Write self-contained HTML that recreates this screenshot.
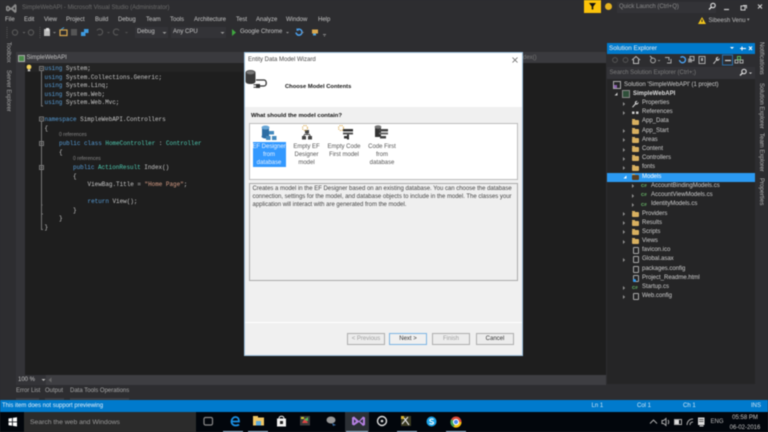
<!DOCTYPE html>
<html><head><meta charset="utf-8"><style>
html,body{margin:0;padding:0;width:768px;height:432px;overflow:hidden;background:#2d2d30}
#w{position:absolute;left:0;top:0;width:768px;height:432px;overflow:hidden;background:#2d2d30;filter:blur(.4px)}
body{font-family:"Liberation Sans",sans-serif;font-size:6px;color:#c8c8c8}
.a{position:absolute}
.t{position:absolute;white-space:nowrap;line-height:9px}
.c{position:absolute;white-space:nowrap;font-family:"Liberation Mono",monospace;font-size:5.95px;line-height:9px;color:#c8c8c8}
.k{color:#569cd6}.g{color:#4ec9b0}.s{color:#d69d85}
.r{position:absolute;font-size:5px;color:#888;white-space:nowrap;line-height:6px}
.v{position:absolute;writing-mode:vertical-rl;white-space:nowrap;font-size:6px;color:#b5b5b5;line-height:8px}
.tr{position:absolute;white-space:nowrap;font-size:6px;line-height:9px;color:#d0d0d0}
.f{position:absolute;width:7px;height:5px;background:#d8b060;border-radius:1px}
.f:before{content:"";position:absolute;left:0;top:-1px;width:3px;height:1px;background:#d8b060}
.ar{position:absolute;width:0;height:0;border-left:2.5px solid #999;border-top:2px solid transparent;border-bottom:2px solid transparent}
.b{position:absolute;height:12px;top:333px;width:38px;background:#ececec;border:1px solid #adadad;box-sizing:border-box;text-align:center;font-size:6px;line-height:10.5px;color:#a0a0a0}
.cs{position:absolute;font-size:4.5px;font-weight:bold;color:#6fc36f;line-height:6px}
.d{position:absolute;width:6px;height:7px;border:1px solid #aaa;box-sizing:border-box;border-radius:1px}
.l{position:absolute;top:142.7px;text-align:center;font-size:6px;line-height:8px;color:#555;white-space:nowrap}
</style></head><body><div id="w">

<!-- title -->
<svg class="a" style="left:5px;top:3px" width="12" height="11" viewBox="0 0 12 11"><path d="M1 3.5L3 2.5L6 5L10 1L11.5 2V9L10 10L6 6.5L3 8.5L1 7.500ZM2.500 4V7L4 5.500ZM8 5.500L10 7V4Z" fill="#8a8a8a" fill-rule="evenodd"/></svg>
<div class="t" style="left:22px;top:4px;color:#6c6c6c">SimpleWebAPI - Microsoft Visual Studio (Administrator)</div>

<!-- menu -->
<div class="t" style="left:5px;top:16px">File</div>
<div class="t" style="left:24px;top:16px">Edit</div>
<div class="t" style="left:44px;top:16px">View</div>
<div class="t" style="left:66px;top:16px">Project</div>
<div class="t" style="left:95px;top:16px">Build</div>
<div class="t" style="left:118px;top:16px">Debug</div>
<div class="t" style="left:146px;top:16px">Team</div>
<div class="t" style="left:170px;top:16px">Tools</div>
<div class="t" style="left:194px;top:16px">Architecture</div>
<div class="t" style="left:236px;top:16px">Test</div>
<div class="t" style="left:256px;top:16px">Analyze</div>
<div class="t" style="left:286px;top:16px">Window</div>
<div class="t" style="left:318px;top:16px">Help</div>

<!-- toolbar -->
<svg class="a" style="left:0;top:26px" width="340" height="13" viewBox="0 0 340 13">
<path d="M7 1v11" stroke="#555" stroke-dasharray="1 1"/>
<circle cx="15" cy="6.500" r="2.600" fill="none" stroke="#555" stroke-width="1.200"/><path d="M22.500 6l1.500 1.500 1.500-1.500z" fill="#666"/>
<circle cx="31" cy="6.500" r="2.600" fill="none" stroke="#555" stroke-width="1.200"/>
<path d="M40 1v11" stroke="#555" stroke-dasharray="1 1"/>
<rect x="44" y="3" width="6" height="7" fill="#bbb"/><rect x="46" y="2" width="3" height="3" fill="#ddd"/>
<path d="M53 6l1.500 1.500 1.500-1.500z" fill="#888"/>
<rect x="60" y="4" width="7" height="5.500" fill="none" stroke="#d9a84f" stroke-width="1.200"/><path d="M61 3.500l3-2" stroke="#4aa0dd"/>
<rect x="71" y="3" width="6" height="6.500" fill="#555"/>
<rect x="81" y="6" width="4.500" height="4" fill="#3f9be0"/><rect x="84" y="3" width="4.500" height="4" fill="#3f9be0"/>
<path d="M97 4.500a3 3 0 1 1 1 4" fill="none" stroke="#555" stroke-width="1.200"/><path d="M107 6l1.500 1.500 1.500-1.500z" fill="#555"/>
<path d="M119 4.500a3 3 0 1 0-1 4" fill="none" stroke="#555" stroke-width="1.200"/><path d="M125 6l1.500 1.500 1.500-1.500z" fill="#555"/>
<path d="M232 3l4 3.500-4 3.500z" fill="#3fa63f"/>
<path d="M286 6l1.500 1.500 1.500-1.500z" fill="#999"/>
<path d="M296 6.500a3 3 0 1 0 1-2.600" fill="none" stroke="#4aa0ee" stroke-width="1.500"/><path d="M296.500 2v2.800h2.600z" fill="#4aa0ee"/>
<path d="M301 6l1.500 1.500 1.500-1.500z" fill="#888"/>
<rect x="312" y="3.500" width="6" height="4" fill="#d9a84f"/><rect x="313" y="7.500" width="3" height="2" fill="#4aa0dd"/>
<path d="M323 8.500h3M324 10h1" stroke="#888"/>
</svg>
<div class="a" style="left:135px;top:27px;width:33px;height:11px;background:#333337"></div>
<div class="t" style="left:137px;top:28px">Debug</div>
<svg class="a" style="left:162px;top:31px" width="5" height="4"><path d="M0.500 1l2 2 2-2z" fill="#999"/></svg>
<div class="a" style="left:171px;top:27px;width:55px;height:11px;background:#333337"></div>
<div class="t" style="left:173px;top:28px">Any CPU</div>
<svg class="a" style="left:220px;top:31px" width="5" height="4"><path d="M0.500 1l2 2 2-2z" fill="#999"/></svg>
<div class="t" style="left:240px;top:28px">Google Chrome</div>

<!-- top right -->
<div class="a" style="left:584px;top:0;width:17px;height:13px;background:#fcc30a"></div>
<svg class="a" style="left:588px;top:2px" width="9" height="8"><path d="M1 1h7L5.300 4.500V7.500H3.700V4.500z" fill="#111"/></svg>
<div class="a" style="left:605px;top:3px;width:7px;height:7px;border-radius:50%;background:#e5b320"></div>
<div class="a" style="left:617px;top:2px;width:99px;height:10.500px;background:#333337"></div>
<div class="t" style="left:619px;top:2.500px;color:#8c8c8c">Quick Launch (Ctrl+Q)</div>
<svg class="a" style="left:708px;top:2px" width="9" height="9"><circle cx="5" cy="3.500" r="2.200" fill="none" stroke="#ddd" stroke-width="1.100"/><path d="M3.500 5L1 7.500" stroke="#ddd" stroke-width="1.300"/></svg>
<svg class="a" style="left:722px;top:2px" width="46" height="10"><path d="M2 7.500h5" stroke="#ccc" stroke-width="1.200"/><rect x="19" y="4" width="4" height="4" fill="none" stroke="#ccc"/><path d="M21 3.500h3.500V6.500" fill="none" stroke="#ccc"/><path d="M36 2.500l4 4M40 2.500l-4 4" stroke="#ccc" stroke-width="1.100"/></svg>
<svg class="a" style="left:698px;top:16px" width="9" height="9"><path d="M4 1L8 8H0z" fill="#f0c41b"/><path d="M4 3.500v2.500" stroke="#222"/></svg>
<div class="t" style="left:708.500px;top:17px;color:#bdbdbd">Sibeesh Venu</div>
<div class="t" style="left:747px;top:16px;color:#999;font-size:5px">▾</div>

<!-- left side tabs -->
<div class="v" style="left:4px;top:42px;color:#a8a8a8">Toolbox</div>
<div class="v" style="left:4px;top:70px;color:#a8a8a8">Server Explorer</div>

<!-- editor -->
<div class="a" style="left:16px;top:52px;width:590px;height:10.500px;background:#3a3a3e"></div>
<div class="a" style="left:16px;top:62.500px;width:9px;height:312px;background:#333337"></div>
<div class="a" style="left:25px;top:62.500px;width:581px;height:312px;background:#1e1e1e"></div>
<div class="a" style="left:25px;top:63px;width:219px;height:9px;background:#242424"></div>
<svg class="a" style="left:18px;top:54.500px" width="7" height="7"><rect x="0.500" y="0.500" width="6" height="6" fill="#4a8a4a" stroke="#aaa"/></svg>
<div class="t" style="left:26.500px;top:54px;color:#c4c4c4">SimpleWebAPI</div>
<div class="t" style="left:523px;top:54px;color:#777">dex()</div>
<svg class="a" style="left:26px;top:64px" width="7" height="9"><circle cx="3" cy="3" r="2.400" fill="#f2d15c"/><rect x="1.800" y="5.500" width="2.400" height="1.800" fill="#ccc"/></svg>

<!-- fold lines -->
<svg class="a" style="left:37px;top:62px" width="12" height="172" stroke="#777" fill="none">
<rect x="2.500" y="4.500" width="4" height="4"/><path d="M3.500 6.500h2M4.500 9v35h1.500"/>
<rect x="2.500" y="55" width="4" height="4"/><path d="M3.500 57h2"/>
<rect x="2.500" y="79.500" width="4" height="4"/><path d="M3.500 81.500h2"/>
<rect x="2.500" y="103.500" width="4" height="4"/><path d="M3.500 105.500h2"/>
<path d="M4.500 59v108.500h1.500M4.500 152h1.500M4.500 143h1"/>
</svg>

<div class="c" style="left:44.500px;top:64px"><span class="k">using</span> System;</div>
<div class="c" style="left:44.500px;top:72.500px"><span class="k">using</span> System.Collections.Generic;</div>
<div class="c" style="left:44.500px;top:81px"><span class="k">using</span> System.Linq;</div>
<div class="c" style="left:44.500px;top:89.500px"><span class="k">using</span> System.Web;</div>
<div class="c" style="left:44.500px;top:98px"><span class="k">using</span> System.Web.Mvc;</div>
<div class="c" style="left:44.500px;top:115px"><span class="k">namespace</span> SimpleWebAPI.Controllers</div>
<div class="c" style="left:44.500px;top:123.500px">{</div>
<div class="r" style="left:59px;top:132px">0 references</div>
<div class="c" style="left:59px;top:139px"><span class="k">public</span> <span class="k">class</span> <span class="g">HomeController</span> : <span class="g">Controller</span></div>
<div class="c" style="left:59px;top:147.500px">{</div>
<div class="r" style="left:73px;top:156px">0 references</div>
<div class="c" style="left:73px;top:163px"><span class="k">public</span> <span class="g">ActionResult</span> Index()</div>
<div class="c" style="left:73px;top:171.500px">{</div>
<div class="c" style="left:87.500px;top:180px">ViewBag.Title = <span class="s">"Home Page"</span>;</div>
<div class="c" style="left:87.500px;top:197px"><span class="k">return</span> View();</div>
<div class="c" style="left:73px;top:205.500px">}</div>
<div class="c" style="left:59px;top:214px">}</div>
<div class="c" style="left:44.500px;top:222.500px">}</div>

<!-- scrollbar row -->
<div class="a" style="left:16px;top:375px;width:590px;height:10px;background:#3e3e42"></div>
<div class="a" style="left:16px;top:375px;width:30px;height:10px;background:#333337"></div>
<div class="t" style="left:18px;top:375.500px;color:#c4c4c4">100 %</div>
<svg class="a" style="left:41px;top:378px" width="5" height="4"><path d="M0.500 1l2 2 2-2z" fill="#bbb"/></svg>
<svg class="a" style="left:48px;top:377px" width="4" height="6"><path d="M3.500 0.500L0.500 3l3 2.500z" fill="#666"/></svg>

<!-- bottom tabs -->
<div class="t" style="left:16px;top:387px;color:#a8a8a8">Error List</div>
<div class="t" style="left:45px;top:387px;color:#a8a8a8">Output</div>
<div class="t" style="left:70px;top:387px;color:#a8a8a8">Data Tools Operations</div>
<div class="a" style="left:16px;top:397.500px;width:23px;height:2.500px;background:#3e3e42"></div>
<div class="a" style="left:45px;top:397.500px;width:19px;height:2.500px;background:#3e3e42"></div>
<div class="a" style="left:70px;top:397.500px;width:59px;height:2.500px;background:#3e3e42"></div>

<!-- right tabs -->
<div class="v" style="left:757px;top:42px">Notifications</div>
<div class="v" style="left:757px;top:83px">Solution Explorer</div>
<div class="v" style="left:757px;top:133px">Team Explorer</div>
<div class="v" style="left:757px;top:178px">Properties</div>

<!-- solution explorer -->
<div class="a" style="left:607px;top:43px;width:148px;height:341px;background:#252526"></div>
<div class="a" style="left:607px;top:43px;width:148px;height:10.500px;background:#007acc"></div>
<div class="t" style="left:609px;top:44px;color:#f0f0f0;font-size:6.300px">Solution Explorer</div>
<svg class="a" style="left:728px;top:44px" width="26" height="9"><path d="M2 3l2 2 2-2z" fill="#fff"/><path d="M12 4.500h6M14 2.500v4" stroke="#fff"/><path d="M21 2.500l3 3.500M24 2.500l-3 3.500" stroke="#fff"/></svg>
<div class="a" style="left:607px;top:53.500px;width:148px;height:13px;background:#2d2d30"></div>
<svg class="a" style="left:607px;top:54px" width="148" height="12">
<circle cx="8" cy="6" r="2.400" fill="none" stroke="#555"/><circle cx="18.500" cy="6" r="2.400" fill="none" stroke="#555"/>
<path d="M25 6l4-3.500 4 3.500M26.500 5.500V9.500h5V5.500" fill="none" stroke="#bbb"/>
<circle cx="46" cy="6.500" r="2.400" fill="none" stroke="#aaa"/><path d="M43 2l2 2" stroke="#bbb"/><path d="M50.500 6l1.500 1.500 1.500-1.500z" fill="#888"/>
<path d="M58 3.500h4v3M60 9h4V5" fill="none" stroke="#aaa"/>
<path d="M72.500 6a3 3 0 1 0 1-2.500" fill="none" stroke="#4aa0ee" stroke-width="1.400"/>
<rect x="81" y="4.500" width="4" height="4" fill="#888"/><rect x="83" y="2.500" width="4" height="4" fill="none" stroke="#aaa"/>
<rect x="92" y="2.500" width="6" height="7" fill="none" stroke="#aaa"/><rect x="94" y="4" width="2" height="3" fill="#aaa"/>
<path d="M106 9.500l3-3.500c-1-2 1-3.500 2.500-3l-1.500 1.500 1 1 1.500-1.500c.5 1.500-1 3.500-3 2.500l-2.500 3.500z" fill="#ccc"/>
<rect x="115.500" y="1" width="10" height="10" fill="none" stroke="#2a6fa8"/><path d="M118 6.500h6" stroke="#ddd" stroke-width="1.200"/>
<rect x="128" y="6" width="3" height="3" fill="none" stroke="#aaa"/><rect x="133" y="6" width="3" height="3" fill="none" stroke="#aaa"/><rect x="130.500" y="2.500" width="3" height="3" fill="none" stroke="#5cb85c"/>
</svg>
<div class="a" style="left:607px;top:67px;width:148px;height:12px;background:#333337"></div>
<div class="t" style="left:609.500px;top:68.500px;color:#7c7c7c">Search Solution Explorer (Ctrl+;)</div>
<svg class="a" style="left:739px;top:68px" width="14" height="9"><circle cx="5" cy="3.500" r="2.200" fill="none" stroke="#ddd" stroke-width="1.100"/><path d="M3.500 5L1 7.500" stroke="#ddd" stroke-width="1.300"/><path d="M10 4.500l1.500 1.500 1.500-1.500z" fill="#ddd"/></svg>

<!-- tree -->
<div class="a" style="left:607px;top:172.500px;width:148px;height:9.200px;background:#2b9af3"></div>
<svg class="a" style="left:613px;top:81px" width="8" height="8"><rect x="0.500" y="0.500" width="7" height="7" fill="none" stroke="#aaa"/><rect x="1" y="4" width="3" height="3" fill="#8a5fb0"/></svg>
<div class="tr" style="left:624px;top:80.500px">Solution 'SimpleWebAPI' (1 project)</div>
<svg class="a" style="left:613.500px;top:92px" width="4" height="4"><path d="M3.500 0.500V3.500H0.500z" fill="#ccc"/></svg>
<svg class="a" style="left:622px;top:90px" width="8" height="8"><rect x="0.500" y="0.500" width="7" height="7" fill="#2f4f3a" stroke="#888"/></svg>
<div class="tr" style="left:633px;top:89.500px;font-weight:bold;color:#ddd">SimpleWebAPI</div>

<div class="ar" style="left:622.500px;top:101.500px"></div>
<svg class="a" style="left:631px;top:99.500px" width="8" height="8"><path d="M1 7l3-3.500c-.7-1.800 1-3 2.500-2.500L5 2.500l1 1 1.500-1.500c.3 1.500-1 3.200-2.800 2.500L2 7.500z" fill="#ccc"/></svg>
<div class="tr" style="left:642px;top:99px">Properties</div>
<div class="ar" style="left:622.500px;top:110.700px"></div>
<svg class="a" style="left:631px;top:109px" width="8" height="8"><rect x="1" y="2.500" width="2.500" height="2.500" fill="#ccc"/><rect x="5" y="2.500" width="2.500" height="2.500" fill="#ccc"/></svg>
<div class="tr" style="left:642px;top:108px">References</div>

<div class="f" style="left:632px;top:119.500px"></div><div class="tr" style="left:642px;top:117px">App_Data</div>
<div class="ar" style="left:622.500px;top:129px"></div><div class="f" style="left:632px;top:128.700px"></div><div class="tr" style="left:642px;top:126.500px">App_Start</div>
<div class="ar" style="left:622.500px;top:138px"></div><div class="f" style="left:632px;top:137.900px"></div><div class="tr" style="left:642px;top:135.500px">Areas</div>
<div class="ar" style="left:622.500px;top:147.500px"></div><div class="f" style="left:632px;top:147.100px"></div><div class="tr" style="left:642px;top:145px">Content</div>
<div class="ar" style="left:622.500px;top:156.500px"></div><div class="f" style="left:632px;top:156.300px"></div><div class="tr" style="left:642px;top:154px">Controllers</div>
<div class="ar" style="left:622.500px;top:165.500px"></div><div class="f" style="left:632px;top:165.500px"></div><div class="tr" style="left:642px;top:163px">fonts</div>

<svg class="a" style="left:623px;top:175px" width="4" height="4"><path d="M3.500 0.500V3.500H0.500z" fill="#fff"/></svg>
<div class="f" style="left:632px;top:175px;background:#5a4020"></div><div class="tr" style="left:642px;top:172.500px;color:#fff">Models</div>

<div class="ar" style="left:631.500px;top:184px"></div><div class="cs" style="left:641px;top:183px">C#</div><div class="tr" style="left:651px;top:181.500px">AccountBindingModels.cs</div>
<div class="ar" style="left:631.500px;top:193.500px"></div><div class="cs" style="left:641px;top:192px">C#</div><div class="tr" style="left:651px;top:191px">AccountViewModels.cs</div>
<div class="ar" style="left:631.500px;top:202.500px"></div><div class="cs" style="left:641px;top:201.500px">C#</div><div class="tr" style="left:651px;top:200px">IdentityModels.cs</div>

<div class="ar" style="left:622.500px;top:212px"></div><div class="f" style="left:632px;top:212px"></div><div class="tr" style="left:642px;top:209.500px">Providers</div>
<div class="ar" style="left:622.500px;top:221px"></div><div class="f" style="left:632px;top:221px"></div><div class="tr" style="left:642px;top:218.500px">Results</div>
<div class="ar" style="left:622.500px;top:230px"></div><div class="f" style="left:632px;top:230px"></div><div class="tr" style="left:642px;top:227.500px">Scripts</div>
<div class="ar" style="left:622.500px;top:239.500px"></div><div class="f" style="left:632px;top:239px"></div><div class="tr" style="left:642px;top:237px">Views</div>

<div class="d" style="left:632.500px;top:247px"></div><div class="tr" style="left:642px;top:246px">favicon.ico</div>
<div class="ar" style="left:622.500px;top:257.500px"></div><div class="d" style="left:632.500px;top:256px"></div><div class="tr" style="left:642px;top:255px">Global.asax</div>
<div class="d" style="left:632.500px;top:265.500px"></div><div class="tr" style="left:642px;top:264.500px">packages.config</div>
<div class="d" style="left:632.500px;top:274.500px"></div><div class="a" style="left:633px;top:279px;width:3px;height:3px;background:#2b9af3;border-radius:50%"></div><div class="tr" style="left:642px;top:273.500px">Project_Readme.html</div>
<div class="ar" style="left:622.500px;top:285.500px"></div><div class="cs" style="left:632px;top:284.500px">C#</div><div class="tr" style="left:642px;top:283px">Startup.cs</div>
<div class="ar" style="left:622.500px;top:294.500px"></div><div class="d" style="left:632.500px;top:293px"></div><div class="tr" style="left:642px;top:292px">Web.config</div>

<!-- dialog -->
<div class="a" style="left:244px;top:52px;width:279px;height:304px;background:#f0f0f0;border:1px solid #9fc4e0;box-sizing:border-box"></div>
<div class="a" style="left:245px;top:53px;width:277px;height:54px;background:#fff"></div>
<div class="t" style="left:248px;top:56px;color:#444">Entity Data Model Wizard</div>
<svg class="a" style="left:511px;top:56px" width="8" height="8"><path d="M1.500 1.500l5 5M6.500 1.500l-5 5" stroke="#666" stroke-width=".8"/></svg>
<svg class="a" style="left:245px;top:69px" width="25" height="22"><path d="M0.500 3.500V12.500c0 1.500 2 2.500 5 2.500s5-1 5-2.500V3.500z" fill="#3a3a3a"/><ellipse cx="5.500" cy="3.500" rx="5" ry="2.500" fill="#444"/><ellipse cx="5.500" cy="3.500" rx="4" ry="1.800" fill="#777"/><path d="M11 11h8c3 0 3 6 0 6h-4" fill="none" stroke="#333" stroke-width="1.300"/><rect x="11" y="15" width="4" height="4" fill="#333"/><path d="M8.500 15.800h2.500M8.500 18.200h2.500" stroke="#333"/></svg>
<div class="t" style="left:285px;top:83px;color:#111;font-weight:bold;font-size:5.800px">Choose Model Contents</div>
<div class="t" style="left:251px;top:112px;color:#111;font-weight:bold;font-size:5.900px">What should the model contain?</div>

<div class="a" style="left:249px;top:123px;width:268.500px;height:57px;background:#fff;border:1px solid #bcbcbc;box-sizing:border-box"></div>
<div class="a" style="left:252.700px;top:142.300px;width:33px;height:25px;background:#3399ff"></div>
<svg class="a" style="left:260px;top:125px" width="140" height="17">
<path d="M2 2.500h7v9H2z" fill="#2d6da3"/><ellipse cx="5.500" cy="2.500" rx="4" ry="2" fill="#6aa7d6"/><ellipse cx="5.500" cy="11.500" rx="4" ry="2" fill="#2d6da3"/>
<rect x="9" y="6" width="5" height="3.500" fill="#4489bd"/><rect x="6" y="11" width="4.500" height="4" fill="#4489bd"/><rect x="12" y="11" width="4.500" height="4" fill="#4489bd"/>
<g transform="translate(9 0)"><path d="M38 6V9M35 9.500h6M35 10v1.500M41 10v1.500" stroke="#444"/><rect x="36" y="5" width="4" height="3.500" fill="#444"/><rect x="33" y="11" width="4" height="3.500" fill="#444"/><rect x="39" y="11" width="4" height="3.500" fill="#444"/><circle cx="36" cy="3" r="2.500" fill="none" stroke="#d8a23c" stroke-dasharray="1 1"/></g>
<g transform="translate(12 0)"><rect x="71" y="4" width="10" height="2.500" fill="#333"/><rect x="71" y="7.500" width="10" height="2" fill="#555"/><rect x="72" y="11" width="4" height="2.500" fill="#333"/><rect x="75" y="9.500" width="2" height="5" fill="#333"/><circle cx="69" cy="3" r="2.500" fill="none" stroke="#d8a23c" stroke-dasharray="1 1"/></g>
<g transform="translate(6 0)"><path d="M109 2h6v10h-6z" fill="#333"/><ellipse cx="112" cy="2" rx="3.400" ry="1.700" fill="#777"/><rect x="113" y="4" width="9" height="2.500" fill="#444"/><rect x="113" y="7.500" width="9" height="2" fill="#666"/><rect x="114" y="11" width="6" height="2.500" fill="#444"/></g>
</svg>
<div class="l" style="left:252px;width:34px;color:#e8f2ff">EF Designer<br>from<br>database</div>
<div class="l" style="left:288.500px;width:36px">Empty EF<br>Designer<br>model</div>
<div class="l" style="left:326px;width:36px">Empty Code<br>First model</div>
<div class="l" style="left:364px;width:36px">Code First<br>from<br>database</div>

<div class="a" style="left:249px;top:183px;width:268.500px;height:98px;background:#efefef;border:1px solid #aaa;box-sizing:border-box"></div>
<div class="a" style="left:252.500px;top:185px;width:262px;font-size:5.980px;line-height:8px;color:#444;white-space:nowrap">Creates a model in the EF Designer based on an existing database. You can choose the database<br>connection, settings for the model, and database objects to include in the model. The classes your<br>application will interact with are generated from the model.</div>

<div class="a" style="left:245px;top:322px;width:277px;height:1px;background:#fff"></div>
<div class="b" style="left:347px;">&lt; Previous</div>
<div class="b" style="left:389px;border-color:#7eb4e2;color:#333;background:#f0f0f0">Next &gt;</div>
<div class="b" style="left:432px;">Finish</div>
<div class="b" style="left:476px;color:#333">Cancel</div>

<!-- status -->
<div class="a" style="left:0;top:400px;width:768px;height:12px;background:#007acc"></div>
<div class="t" style="left:2px;top:401.500px;color:#e4f1fb">This item does not support previewing</div>
<div class="t" style="left:591.500px;top:401.500px;color:#cfe6f6">Ln 1</div>
<div class="t" style="left:637px;top:401.500px;color:#cfe6f6">Col 1</div>
<div class="t" style="left:683px;top:401.500px;color:#cfe6f6">Ch 1</div>
<div class="t" style="left:751px;top:401.500px;color:#cfe6f6">INS</div>

<!-- taskbar -->
<div class="a" style="left:0;top:412px;width:768px;height:20px;background:#02060c"></div>
<svg class="a" style="left:8px;top:417px" width="10" height="10"><path d="M0.500 1.500L4 1V4.500H0.500zM4.800 0.900L9 0.300V4.500H4.800zM0.500 5.200H4V8.800L0.500 8.300zM4.800 5.200H9V9.500L4.800 8.900z" fill="#fff"/></svg>
<div class="a" style="left:24px;top:412px;width:172px;height:20px;background:#2b2b2b"></div>
<div class="t" style="left:30px;top:417.500px;color:#9a9a9a;font-size:6.800px">Search the web and Windows</div>
<div class="a" style="left:345px;top:412px;width:24px;height:20px;background:#2b2f34"></div>
<svg class="a" style="left:196px;top:412px" width="300" height="20">
<rect x="8" y="5.500" width="8.500" height="7.500" rx="1.500" fill="none" stroke="#888" stroke-width="1.200"/>
<path d="M36 9.500h7c0-3-1.500-4.500-3.500-4.500S35.500 7 35.500 9.500c0 2.500 2 4 4 4 1.500 0 3-.5 3.500-1" fill="none" stroke="#1a8fe3" stroke-width="1.800"/>
<rect x="57" y="5.500" width="11" height="8" fill="#f0c766"/><rect x="57" y="4" width="5" height="2" fill="#f0c766"/><rect x="60" y="9" width="5" height="4.500" fill="#5aa9dd"/>
<rect x="81" y="6.500" width="9" height="8" fill="#f2f2f2"/><path d="M83 6.500c0-3 5-3 5 0" fill="none" stroke="#f2f2f2"/><rect x="84" y="9" width="3" height="3" fill="#222"/>
<rect x="104" y="4" width="10" height="9.500" fill="#3a3a3a"/><path d="M106 11l3-5 3 5z" fill="#d44"/><path d="M108 8l4-3v4z" fill="#5b5"/><rect x="105" y="5" width="3" height="2" fill="#cc3"/>
<ellipse cx="135" cy="8" rx="4.500" ry="3.500" fill="#999"/><path d="M136 11l4 2-3 1z" fill="#3a6ea5"/>
<path d="M156 5.500L158 4.500L163 9L167 4.500L169 5.500V13L167 14L163 10L158 13.500L156 12.500ZM158 7.200V11.200L160 9.200ZM164 9.200L167 11.500V7Z" fill="#b47fe0" fill-rule="evenodd"/>
<circle cx="186" cy="9" r="4.500" fill="none" stroke="#ddd" stroke-width="1.400"/><circle cx="186" cy="9" r="1.300" fill="#ddd"/>
<g transform="translate(-8 0)"><rect x="213" y="4" width="10" height="10" fill="#3a3a20"/><path d="M214 12l6-7M216 6l5 7" stroke="#ddd" stroke-width="1.200"/><rect x="213" y="4" width="3" height="3" fill="#d8b42f"/></g>
</svg>
<div class="a" style="left:223px;top:431px;width:20px;height:1px;background:#a9c9e4"></div>
<div class="a" style="left:248px;top:431px;width:20px;height:1px;background:#a9c9e4"></div>
<div class="a" style="left:346px;top:431px;width:22px;height:1px;background:#a9c9e4"></div>
<div class="a" style="left:397px;top:431px;width:20px;height:1px;background:#a9c9e4"></div>
<div class="a" style="left:446px;top:431px;width:20px;height:1px;background:#a9c9e4"></div>
<svg class="a" style="left:426px;top:416px" width="11" height="11"><circle cx="5.500" cy="5.500" r="5" fill="#1ba3e8"/><path d="M7.500 3.700C6.500 2.800 3.800 2.900 3.800 4.300 3.800 6 7.500 5.200 7.500 7 7.500 8.400 4.500 8.400 3.500 7.300" fill="none" stroke="#fff" stroke-width="1.100"/></svg>
<svg class="a" style="left:450px;top:416px" width="12" height="12"><circle cx="6" cy="6" r="5.500" fill="#dd4b39"/><path d="M6 6L11.500 6A5.500 5.500 0 0 1 3.500 11z" fill="#f4c20d"/><path d="M6 6L3.500 11A5.500 5.500 0 0 1 1.200 3.200z" fill="#3da154"/><circle cx="6" cy="6" r="2.600" fill="#4a8cf0" stroke="#fff"/></svg>
<svg class="a" style="left:648px;top:416px" width="74" height="12" stroke="#aaa" fill="none">
<path d="M2 7.500L5.500 4 9 7.500"/>
<path d="M14 4.500h1.500L18 2.500V9.500L15.500 7.500H14zM20 4c1 1 1 3 0 4" />
<rect x="26.500" y="3.500" width="7" height="5"/><rect x="27" y="4" width="4" height="4" fill="#ddd" stroke="none"/>
<path d="M39 9c0-3 2-6 6-6M42 9c0-2 1-3 3-3"/>
<rect x="50" y="1.500" width="6.500" height="7.500" fill="#ddd" stroke="none"/><path d="M51 3.500h4.500M51 5.500h4.500" stroke="#333" stroke-width=".7"/><path d="M51.500 10h4" stroke="#ddd"/>
</svg>
<div class="t" style="left:710.500px;top:418px;color:#bbb;font-size:6px">ENG</div>
<div class="a" style="left:728px;top:413px;width:34px;text-align:center;font-size:6px;line-height:10px;color:#c4c4c4;white-space:nowrap">05:58 PM<br>06-02-2016</div>

</div></body></html>
